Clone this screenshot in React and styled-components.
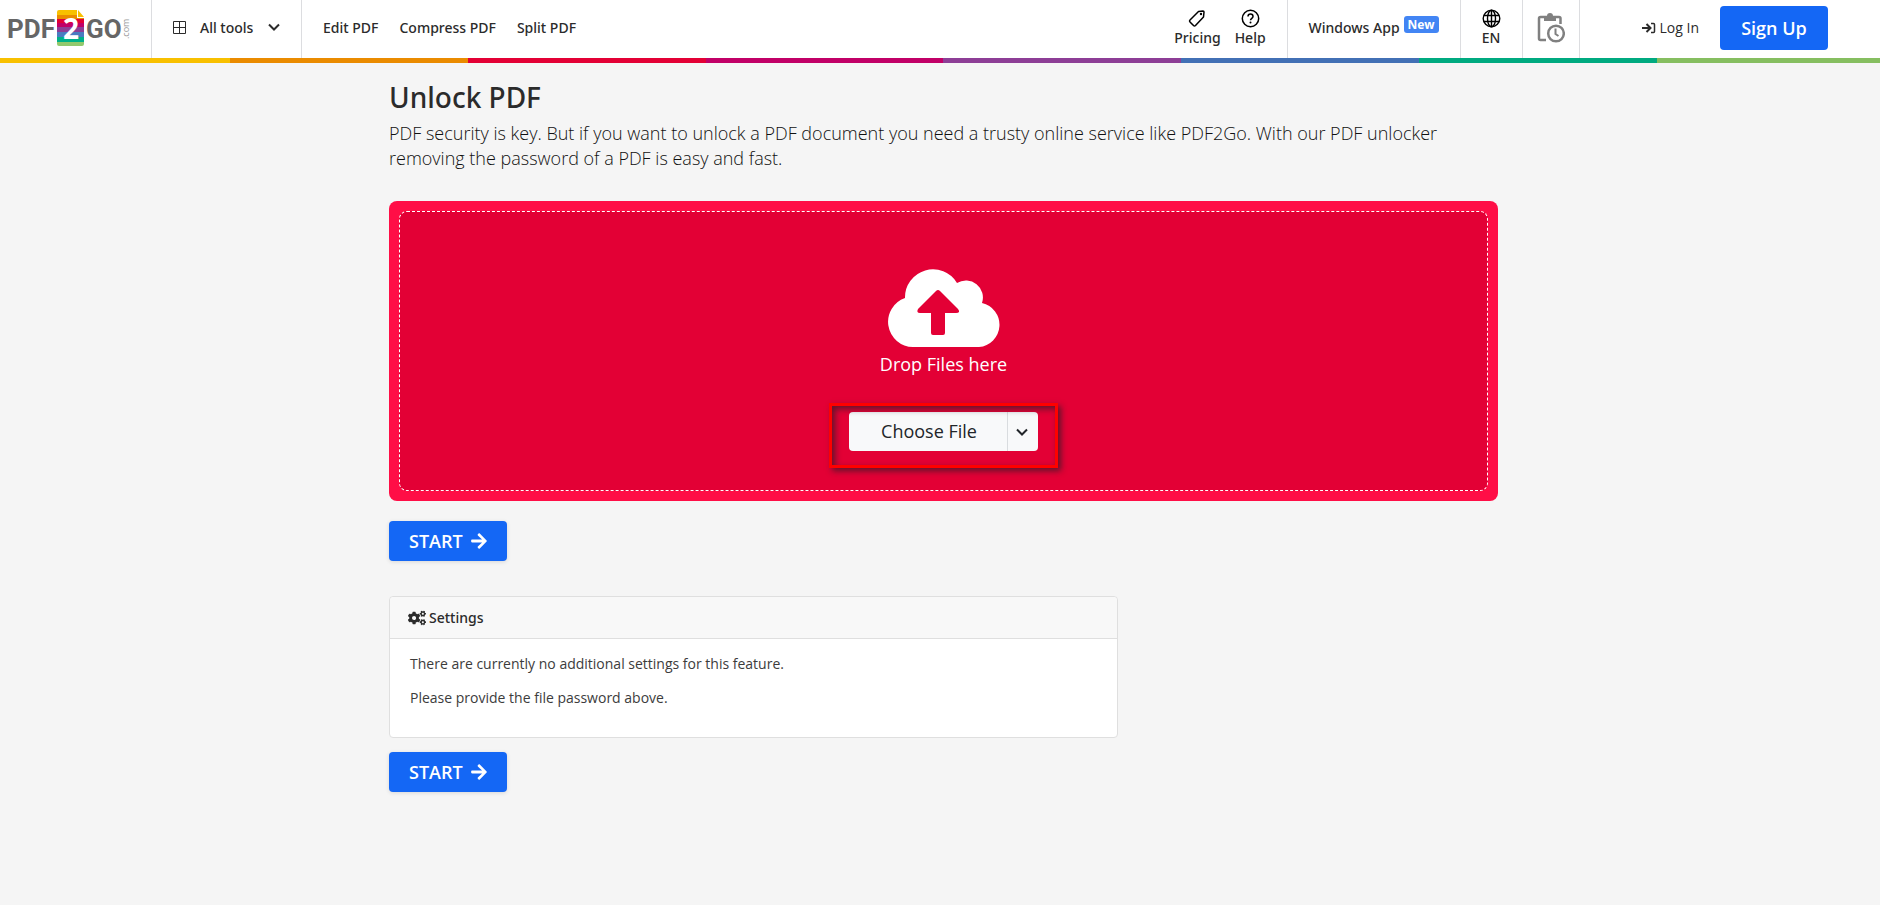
import React from "react";
import styled, { createGlobalStyle } from "styled-components";
import { FaArrowRight, FaCogs } from "react-icons/fa";

const GlobalStyle = createGlobalStyle`
  * {
    box-sizing: border-box;
  }
  body {
    margin: 0;
    background: #f5f5f5;
    color: #2b2b2b;
    font-family: "Open Sans", sans-serif;
    font-size: 14px;
  }
  button {
    font-family: inherit;
    border: none;
    cursor: pointer;
  }
`;

const Header = styled.header`
  display: flex;
  align-items: stretch;
  height: 58px;
  background: #fff;
  font-family: "Noto Sans", sans-serif;
`;

const Stripe = styled.div`
  height: 5px;
  background: linear-gradient(
    to right,
    #f8c000 12.24%,
    #ea8b00 12.24% 24.88%,
    #e30035 24.88% 37.53%,
    #c10067 37.53% 50.18%,
    #8d3e96 50.18% 62.82%,
    #4270b5 62.82% 75.47%,
    #00aa80 75.47% 88.13%,
    #86be60 88.13%
  );
`;

const LogoLink = styled.a`
  display: flex;
  align-items: center;
  width: 152px;
  padding-left: 7px;
  border-right: 1px solid #dcdde0;
`;

const AllTools = styled.button`
  display: flex;
  align-items: center;
  width: 150px;
  padding: 0 21px 4px;
  background: transparent;
  border-right: 1px solid #dcdde0;
  font-size: 14px;
  font-weight: 500;
  color: #2b2b2b;
  span {
    flex: 1;
    text-align: left;
    padding-left: 14px;
  }
`;

const NavLinks = styled.nav`
  display: flex;
  align-items: center;
  gap: 21px;
  padding: 0 21px 2px;
`;

const NavLink = styled.a`
  display: flex;
  align-items: center;
  gap: 4px;
  color: #2b2b2b;
  font-weight: 500;
  line-height: 20px;
  text-decoration: none;
`;

const NavGroup = styled.div`
  display: flex;
  align-items: center;
  gap: 14px;
  padding: ${(props) => props.$pad || "0 21px 2px"};
  margin-left: ${(props) => (props.$push ? "auto" : "0")};
  border-right: 1px solid #dcdde0;
`;

const IconLink = styled.a`
  display: flex;
  flex-direction: column;
  align-items: center;
  color: #2b2b2b;
  font-weight: 500;
  line-height: 20px;
  text-decoration: none;
  svg {
    color: #000;
  }
`;

const Badge = styled.span`
  margin-bottom: 8px;
  padding: 0 4px;
  border-radius: 3px;
  background: #4285f4;
  color: #fff;
  font-size: 12px;
  font-weight: 700;
  line-height: 17px;
`;

const Account = styled.div`
  display: flex;
  align-items: center;
  gap: 21px;
  padding: 0 52px 2px 62px;
  font-family: "Open Sans", sans-serif;
`;

const SignUp = styled.button`
  width: 108px;
  height: 44px;
  border-radius: 4px;
  background: #1467f5;
  color: #fff;
  font-size: 18px;
  font-weight: 600;
`;

const Page = styled.div`
  padding: 15px 0 40px 7px;
`;

const Main = styled.main`
  max-width: 1109px;
  margin: 0 auto;
`;

const Title = styled.h1`
  margin: 0;
  font-family: "Noto Sans", sans-serif;
  font-size: 28px;
  font-weight: 500;
  line-height: 38px;
`;

const Intro = styled.p`
  margin: 5px 0 30px;
  color: #111;
  font-size: 18px;
  font-weight: 300;
  line-height: 25px;
`;

const DropZone = styled.section`
  padding: 10px;
  border-radius: 8px;
  background: #ff0e46;
`;

const DropArea = styled.div`
  display: flex;
  flex-direction: column;
  align-items: center;
  height: 280px;
  padding-top: 57px;
  border: 1px dashed #fff;
  border-radius: 8px;
  background: #e30035;
  color: #fff;
`;

const DropText = styled.p`
  margin: 4px 0 35px;
  font-size: 18px;
  line-height: 26px;
`;

const FilePicker = styled.div`
  position: relative;
  display: flex;
  height: 39px;
`;

const Highlight = styled.div`
  position: absolute;
  top: -9px;
  right: -20px;
  bottom: -17px;
  left: -20px;
  border: 3px solid #ff0000;
  box-shadow: 3px 3px 6px rgba(40, 30, 40, 0.7), inset 3px 3px 6px rgba(40, 30, 40, 0.7);
  pointer-events: none;
`;

const ChooseButton = styled.button`
  width: 159px;
  padding: 0 6px 2px 8px;
  border-right: 1px solid #d9dcdf;
  border-radius: 4px 0 0 4px;
  background: #f8f9fa;
  color: #212529;
  font-size: 18px;
  font-weight: 500;
`;

const MoreButton = styled.button`
  display: flex;
  align-items: center;
  justify-content: center;
  width: 30px;
  padding: 0 2px 0 0;
  border-radius: 0 4px 4px 0;
  background: #f8f9fa;
  color: #212529;
`;

const StartButton = styled.button`
  display: flex;
  align-items: center;
  gap: 7px;
  height: 40px;
  margin: ${(props) => props.$margin};
  padding: 0 19px 0 20px;
  border-radius: 4px;
  background: #1467f5;
  box-shadow: 0 1px 4px rgba(0, 0, 0, 0.12);
  color: #fff;
  font-size: 18px;
  font-weight: 600;
`;

const Card = styled.section`
  max-width: 729px;
  border: 1px solid #dfdfdf;
  border-radius: 4px;
  background: #fff;
`;

const CardHeader = styled.h2`
  display: flex;
  align-items: center;
  gap: 3px;
  height: 42px;
  margin: 0;
  padding: 0 18px;
  border-bottom: 1px solid #dfdfdf;
  border-radius: 4px 4px 0 0;
  background: #f8f8f8;
  font-family: "Noto Sans", sans-serif;
  font-size: 14px;
  font-weight: 500;
`;

const CardBody = styled.div`
  padding: 14px 20px 28px;
  color: #3c3c3c;
  p {
    margin: 0 0 12px;
    line-height: 22px;
  }
  p:last-child {
    margin: 0;
  }
`;

const Chevron = ({ size }) => (
  <svg width={size} height={size} viewBox="0 0 12 12" fill="none" stroke="currentColor" strokeWidth="2">
    <path d="M1 3.5 6 8.5 11 3.5" />
  </svg>
);

const Logo = () => (
  <svg width="124" height="40" viewBox="0 0 124 40" fontFamily="Roboto, sans-serif" fontWeight="700">
    <clipPath id="sheet">
      <path d="M52 1H70V9H77V35a2 2 0 0 1-2 2H52a2 2 0 0 1-2-2V3a2 2 0 0 1 2-2Z" />
    </clipPath>
    <g clipPath="url(#sheet)">
      <rect x="50" y="1" width="27" height="5" fill="#f8c000" />
      <rect x="50" y="6" width="27" height="4" fill="#ea8b00" />
      <rect x="50" y="10" width="27" height="4" fill="#e30035" />
      <rect x="50" y="14" width="27" height="4" fill="#c10067" />
      <rect x="50" y="18" width="27" height="5" fill="#8d3e96" />
      <rect x="50" y="23" width="27" height="5" fill="#4a7cc0" />
      <rect x="50" y="28" width="27" height="5" fill="#00b189" />
      <rect x="50" y="33" width="27" height="5" fill="#92c96c" />
    </g>
    <path d="M71 1 77 8H71Z" fill="#f8c000" />
    <text x="0" y="29" fontSize="26" fill="#666">PDF</text>
    <text x="56" y="30" fontFamily="Open Sans, sans-serif" fontSize="28" fill="#fff">2</text>
    <text x="79" y="29" fontSize="26" fill="#666">GO</text>
    <text transform="translate(122 30) rotate(-90)" fontFamily="Open Sans, sans-serif" fontWeight="400" fontSize="9" fill="#999">.com</text>
  </svg>
);

const GridIcon = () => (
  <svg width="13" height="13" viewBox="0 0 13 13" fill="none" stroke="currentColor">
    <path d="M.5 .5H12.5V12.5H.5ZM6.5 .5V12.5M.5 6.5H12.5" />
  </svg>
);

const TagIcon = () => (
  <svg width="20" height="19" viewBox="0 0 20 19" fill="none" stroke="currentColor" strokeWidth="1.5" strokeLinejoin="round">
    <path d="M11.5 2.5 16 2Q17 2 17 3L16.5 8 8.5 16.5Q7.5 17.5 6.5 16.5L3 13Q2 12 3 11Z" />
    <circle cx="14" cy="5" r="1.2" fill="currentColor" stroke="none" />
  </svg>
);

const HelpIcon = () => (
  <svg width="19" height="19" viewBox="0 0 19 19" fill="none" stroke="currentColor" strokeWidth="1.5">
    <circle cx="9.5" cy="9.5" r="8.2" />
    <path d="M7 7.5c0-3.2 5-3.2 5 0 0 1.8-2.5 1.8-2.5 3.8" />
    <circle cx="9.5" cy="13.6" r="1" fill="currentColor" stroke="none" />
  </svg>
);

const GlobeIcon = () => (
  <svg width="19" height="19" viewBox="0 0 19 19" fill="none" stroke="currentColor" strokeWidth="1.4">
    <circle cx="9.5" cy="9.5" r="8.3" />
    <ellipse cx="9.5" cy="9.5" rx="4" ry="8.3" />
    <path d="M9.5 1V18M2 6.5H17M2 12.5H17" />
  </svg>
);

const HistoryIcon = () => (
  <svg width="28" height="30" viewBox="0 0 28 30" fill="none" stroke="#808080" strokeWidth="2.5">
    <path d="M9 27H3.5A1.5 1.5 0 0 1 2 25.5V5.5A1.5 1.5 0 0 1 3.5 4H22A1.5 1.5 0 0 1 23.5 5.5V11" />
    <path d="M7 3H10A3 3 0 0 1 16 3H19V8H7Z" fill="#808080" stroke="none" />
    <circle cx="19" cy="20.5" r="7.8" />
    <path d="M18.5 15.5V21L21.5 23" strokeWidth="2" />
  </svg>
);

const LoginIcon = () => (
  <svg width="14" height="12" viewBox="0 0 14 12" fill="none" stroke="currentColor" strokeWidth="2">
    <path d="M0 6H8M4.5 2 8.5 6 4.5 10" />
    <path d="M9 1.5H11.5A1 1 0 0 1 12.5 2.5V9.5A1 1 0 0 1 11.5 10.5H9" strokeWidth="1.5" />
  </svg>
);

const CloudIcon = () => (
  <svg width="112" height="78" viewBox="0 0 112 78">
    <path
      fill="#fff"
      d="M25 78A25.200 25.200 0 0 1 17 29A28 28 0 0 1 69 14A17 17 0 0 1 94 34A22.300 22.300 0 0 1 91 78Z"
    />
    <path
      fill="#e30035"
      d="M48 22Q50 20 52 22L70 40Q73 44 68 44H57V64Q57 66 55 66H45Q43 66 43 64V44H32Q28 44 30 40Z"
    />
  </svg>
);

const App = () => {
  return (
    <>
      <GlobalStyle />
      <Header>
        <LogoLink href="#" aria-label="PDF2Go.com">
          <Logo />
        </LogoLink>
        <AllTools type="button">
          <GridIcon />
          <span>All tools</span>
          <Chevron size={12} />
        </AllTools>
        <NavLinks>
          <NavLink href="#">Edit PDF</NavLink>
          <NavLink href="#">Compress PDF</NavLink>
          <NavLink href="#">Split PDF</NavLink>
        </NavLinks>
        <NavGroup $push>
          <IconLink href="#">
            <TagIcon />
            Pricing
          </IconLink>
          <IconLink href="#">
            <HelpIcon />
            Help
          </IconLink>
        </NavGroup>
        <NavGroup>
          <NavLink href="#">
            Windows App <Badge>New</Badge>
          </NavLink>
        </NavGroup>
        <NavGroup>
          <IconLink href="#">
            <GlobeIcon />
            EN
          </IconLink>
        </NavGroup>
        <NavGroup $pad="0 14px 2px">
          <NavLink href="#" aria-label="History">
            <HistoryIcon />
          </NavLink>
        </NavGroup>
        <Account>
          <NavLink href="#">
            <LoginIcon />
            Log In
          </NavLink>
          <SignUp type="button">Sign Up</SignUp>
        </Account>
      </Header>
      <Stripe />
      <Page>
        <Main>
          <Title>Unlock PDF</Title>
          <Intro>
            PDF security is key. But if you want to unlock a PDF document you need a trusty online service like
            PDF2Go. With our PDF unlocker removing the password of a PDF is easy and fast.
          </Intro>
          <DropZone>
            <DropArea>
              <CloudIcon />
              <DropText>Drop Files here</DropText>
              <FilePicker>
                <ChooseButton type="button">Choose File</ChooseButton>
                <MoreButton type="button" aria-label="More sources">
                  <Chevron size={12} />
                </MoreButton>
                <Highlight />
              </FilePicker>
            </DropArea>
          </DropZone>
          <StartButton type="button" $margin="20px 0 35px">
            START <FaArrowRight />
          </StartButton>
          <Card>
            <CardHeader>
              <FaCogs size={18} />
              Settings
            </CardHeader>
            <CardBody>
              <p>There are currently no additional settings for this feature.</p>
              <p>Please provide the file password above.</p>
            </CardBody>
          </Card>
          <StartButton type="button" $margin="14px 0 0">
            START <FaArrowRight />
          </StartButton>
        </Main>
      </Page>
    </>
  );
};

export default App;
